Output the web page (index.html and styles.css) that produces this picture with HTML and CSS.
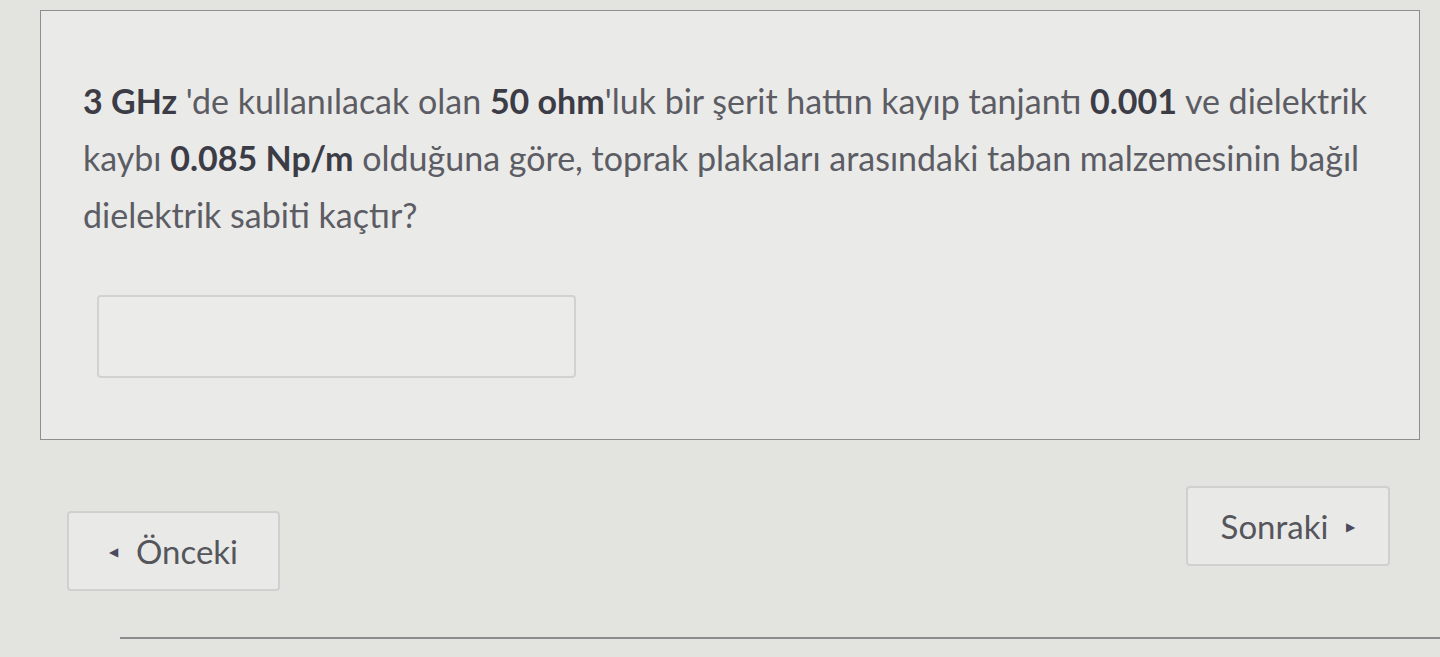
FILE: index.html
```html
<!DOCTYPE html>
<html lang="tr">
<head>
    <meta charset="UTF-8">
    <meta name="viewport" content="width=device-width, initial-scale=1.0">
    <title>Soru</title>
    <link rel="stylesheet" href="styles.css">
</head>
<body>
    <div class="questionBox">
        <p class="questionText">
            <b>3 GHz</b> 'de kullanılacak olan <b>50 ohm</b>'luk bir şerit hattın kayıp tanjantı <b>0.001</b> ve dielektrik kaybı <b>0.085 Np/m</b> olduğuna göre, toprak plakaları arasındaki taban malzemesinin bağıl dielektrik sabiti kaçtır?
        </p>
        <input type="text" class="answerInput">
    </div>

    <div class="navRow">
        <button class="navButton prevButton"><span class="arrow">&#9664;</span> Önceki</button>
        <button class="navButton nextButton">Sonraki <span class="arrow">&#9654;</span></button>
    </div>

    <div class="bottomLine"></div>
</body>
</html>
```

FILE: styles.css
```css
body {
    margin: 0;
    background: #e3e3e0;
    font-family: Lato, "Open Sans", sans-serif;
    color: #5c5c64;
}

.questionBox {
    margin: 10px 20px 0 40px;
    height: 430px;
    box-sizing: border-box;
    padding: 61px 40px 0 42px;
    background: #eaeae8;
    border: 1px solid #8e8e8e;
}

.questionText {
    margin: 0;
    width: 1310px;
    font-size: 34px;
    line-height: 57px;
    letter-spacing: 0;
}

.questionText b {
    color: #3c3c46;
}

.answerInput {
    display: block;
    margin: 52px 0 0 14px;
    width: 479px;
    height: 83px;
    box-sizing: border-box;
    background: #ebebe9;
    border: 2px solid #d2d2d0;
    border-radius: 4px;
}

.navRow {
    display: flex;
    justify-content: space-between;
    align-items: flex-start;
    margin: 46px 50px 0 67px;
}

.navButton {
    height: 80px;
    box-sizing: border-box;
    background: #e9e9e7;
    border: 2px solid #d0d0ce;
    border-radius: 4px;
    font-family: Lato, "Open Sans", sans-serif;
    font-size: 33px;
    color: #55555c;
    display: flex;
    align-items: center;
    justify-content: center;
    gap: 18px;
}

.prevButton {
    width: 213px;
    margin-top: 25px;
}

.nextButton {
    width: 204px;
}

.arrow {
    font-size: 12px;
    color: #4a4a60;
}

.bottomLine {
    margin: 46px 0 0 120px;
    border-top: 2px solid #8c8c8c;
}
```
